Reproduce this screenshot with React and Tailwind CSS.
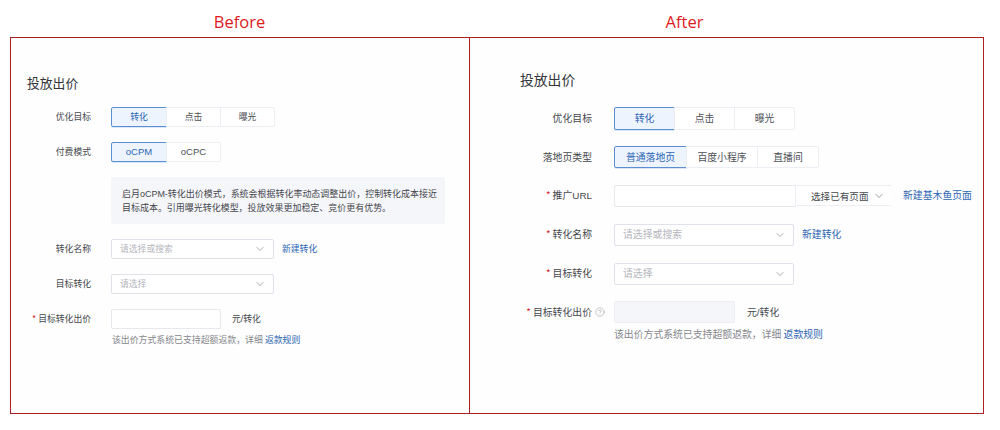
import React from "react";
import { ChevronDown, CircleHelp } from "lucide-react";

const font = { fontFamily: '"Noto Sans CJK SC", "Liberation Sans", sans-serif' };

function L({ children }) {
  return <span className="font-['Liberation_Sans']">{children}</span>;
}

function Seg({ items, widths, h = "h-[20px]", text = "text-[9.5px]" }) {
  return (
    <div className={`flex ${h} ${text}`}>
      {items.map((t, i) => (
        <div
          key={i}
          style={{ width: widths[i] }}
          className={
            "flex items-center justify-center border " +
            (i === 0
              ? "rounded-l-[2px] border-[#5b8fd2] bg-[#eef4fd] text-[#2b65b3] shadow-[0_1px_0_#dbe6f6]"
              : "-ml-px border-[#eceef3] bg-white text-[#4d4f55] " + (i === items.length - 1 ? "rounded-r-[2px]" : ""))
          }
        >
          {t}
        </div>
      ))}
    </div>
  );
}

function Req() {
  return <span className="mr-[2px] text-[#cf2b2b]">*</span>;
}

function Select({ w, h, text, ph }) {
  return (
    <div className={`flex items-center justify-between rounded-[2px] border border-[#dfe2ea] bg-white pl-[8px] pr-[7px] ${w} ${h} ${text} text-[#b4b6bc]`}>
      <span>{ph}</span>
      <ChevronDown size={12} strokeWidth={1} className="text-[#55575d]" />
    </div>
  );
}

function BeforeRow({ label, req, children }) {
  return (
    <div className="flex h-[20px] items-center">
      <div className="flex w-[80px] shrink-0 justify-end text-[8.8px] text-[#45474c]">
        {req && <Req />}
        {label}
      </div>
      <div className="ml-[20px] flex items-center">{children}</div>
    </div>
  );
}

function AfterRow({ label, req, help, children }) {
  return (
    <div className="flex h-[22px] items-center">
      <div className="relative flex w-[122px] shrink-0 items-center justify-end text-[9.85px] text-[#45474c]">
        {req && <Req />}
        {label}
        {help && <CircleHelp size={10} strokeWidth={1} className="absolute left-[125px] text-[#77797f]" />}
      </div>
      <div className="ml-[22px] flex items-center">{children}</div>
    </div>
  );
}

export default function App() {
  return (
    <div style={font} className="h-[430px] w-[1000px] overflow-hidden bg-white">
      <div className="flex h-[37px] items-center pl-[10px] pt-[7px] text-[16.5px] text-[#dc1a1e] font-['Open_Sans']">
        <div className="w-[459px] text-center">Before</div>
        <div className="w-[431px] text-center">After</div>
      </div>
      <div className="ml-[10px] flex h-[377px] w-[974px] border border-[#ad1f22] bg-[#fefefe]">
        <div className="w-[459px] shrink-0 border-r border-[#ad1f22]">
          <div className="ml-[16px] mt-[35px] h-[22px] text-[12.8px] leading-[20px] text-[#33353a]">投放出价</div>
          <div className="mt-[12px] flex flex-col gap-[15px]">
            <BeforeRow label="优化目标">
              <Seg items={["转化", "点击", "曝光"]} widths={[56, 55, 55]} text="text-[8.8px]" />
            </BeforeRow>
            <BeforeRow label="付费模式">
              <Seg items={[<L>oCPM</L>, <L>oCPC</L>]} widths={[56, 55]} />
            </BeforeRow>
            <div className="ml-[100px] flex h-[47px] w-[334px] flex-col justify-center rounded-[2px] bg-[#f5f6fa] pl-[11px] text-[8.98px] leading-[14px] text-[#45474c]">
              <div>启月<L>oCPM-</L>转化出价模式，系统会根据转化率动态调整出价，控制转化成本接近</div>
              <div>目标成本。引用曝光转化模型，投放效果更加稳定、竞价更有优势。</div>
            </div>
            <BeforeRow label="转化名称">
              <Select w="w-[163px]" h="h-[20px]" text="text-[8.8px]" ph="请选择或搜索" />
              <span className="ml-[8px] text-[8.8px] text-[#2b65b3]">新建转化</span>
            </BeforeRow>
            <BeforeRow label="目标转化">
              <Select w="w-[163px]" h="h-[20px]" text="text-[8.8px]" ph="请选择" />
            </BeforeRow>
            <BeforeRow label="目标转化出价" req>
              <div className="h-[20px] w-[110px] rounded-[2px] border border-[#e6e8ee] bg-white" />
              <span className="ml-[11px] text-[8.8px] text-[#45474c]">元<L>/</L>转化</span>
            </BeforeRow>
          </div>
          <div className="ml-[101px] mt-[3px] text-[8.9px] leading-[16px] text-[#85878d]">
            该出价方式系统已支持超额返款，详细 <span className="text-[#2b65b3]">返款规则</span>
          </div>
        </div>
        <div className="flex-1">
          <div className="ml-[50px] mt-[30px] h-[22px] text-[13.8px] leading-[22px] text-[#33353a]">投放出价</div>
          <div className="mt-[17px] flex flex-col gap-[16.9px]">
            <AfterRow label="优化目标">
              <Seg items={["转化", "点击", "曝光"]} widths={[61, 61, 61]} h="h-[23px]" text="text-[9.85px]" />
            </AfterRow>
            <AfterRow label="落地页类型">
              <Seg items={["普通落地页", "百度小程序", "直播间"]} widths={[73, 72, 62]} h="h-[22px]" text="text-[9.85px]" />
            </AfterRow>
            <AfterRow label={<span>推广<L>URL</L></span>} req>
              <div className="h-[22px] w-[182px] rounded-[2px] border border-[#e6e8ee] bg-white" />
              <div className="-ml-px flex h-[21px] w-[96px] items-center justify-between border border-r-0 border-[#eceef3] bg-white pl-[15px] pr-[6px] text-[9.6px] text-[#45474c]">
                <span>选择已有页面</span>
                <ChevronDown size={12} strokeWidth={1.1} />
              </div>
              <span className="ml-[12px] text-[9.85px] text-[#2b65b3]">新建基木鱼页面</span>
            </AfterRow>
            <AfterRow label="转化名称" req>
              <Select w="w-[180px]" h="h-[22px]" text="text-[9.85px]" ph="请选择或搜索" />
              <span className="ml-[8px] text-[9.85px] text-[#2b65b3]">新建转化</span>
            </AfterRow>
            <AfterRow label="目标转化" req>
              <Select w="w-[180px]" h="h-[22px]" text="text-[9.85px]" ph="请选择" />
            </AfterRow>
            <AfterRow label="目标转化出价" req help>
              <div className="h-[22px] w-[121px] rounded-[2px] border border-[#eceef3] bg-[#f5f6fa]" />
              <span className="ml-[12px] text-[9.85px] text-[#45474c]">元<L>/</L>转化</span>
            </AfterRow>
          </div>
          <div className="ml-[144px] mt-[2px] text-[9.85px] leading-[18px] text-[#85878d]">
            该出价方式系统已支持超额返款，详细 <span className="text-[#2b65b3]">返款规则</span>
          </div>
        </div>
      </div>
    </div>
  );
}
